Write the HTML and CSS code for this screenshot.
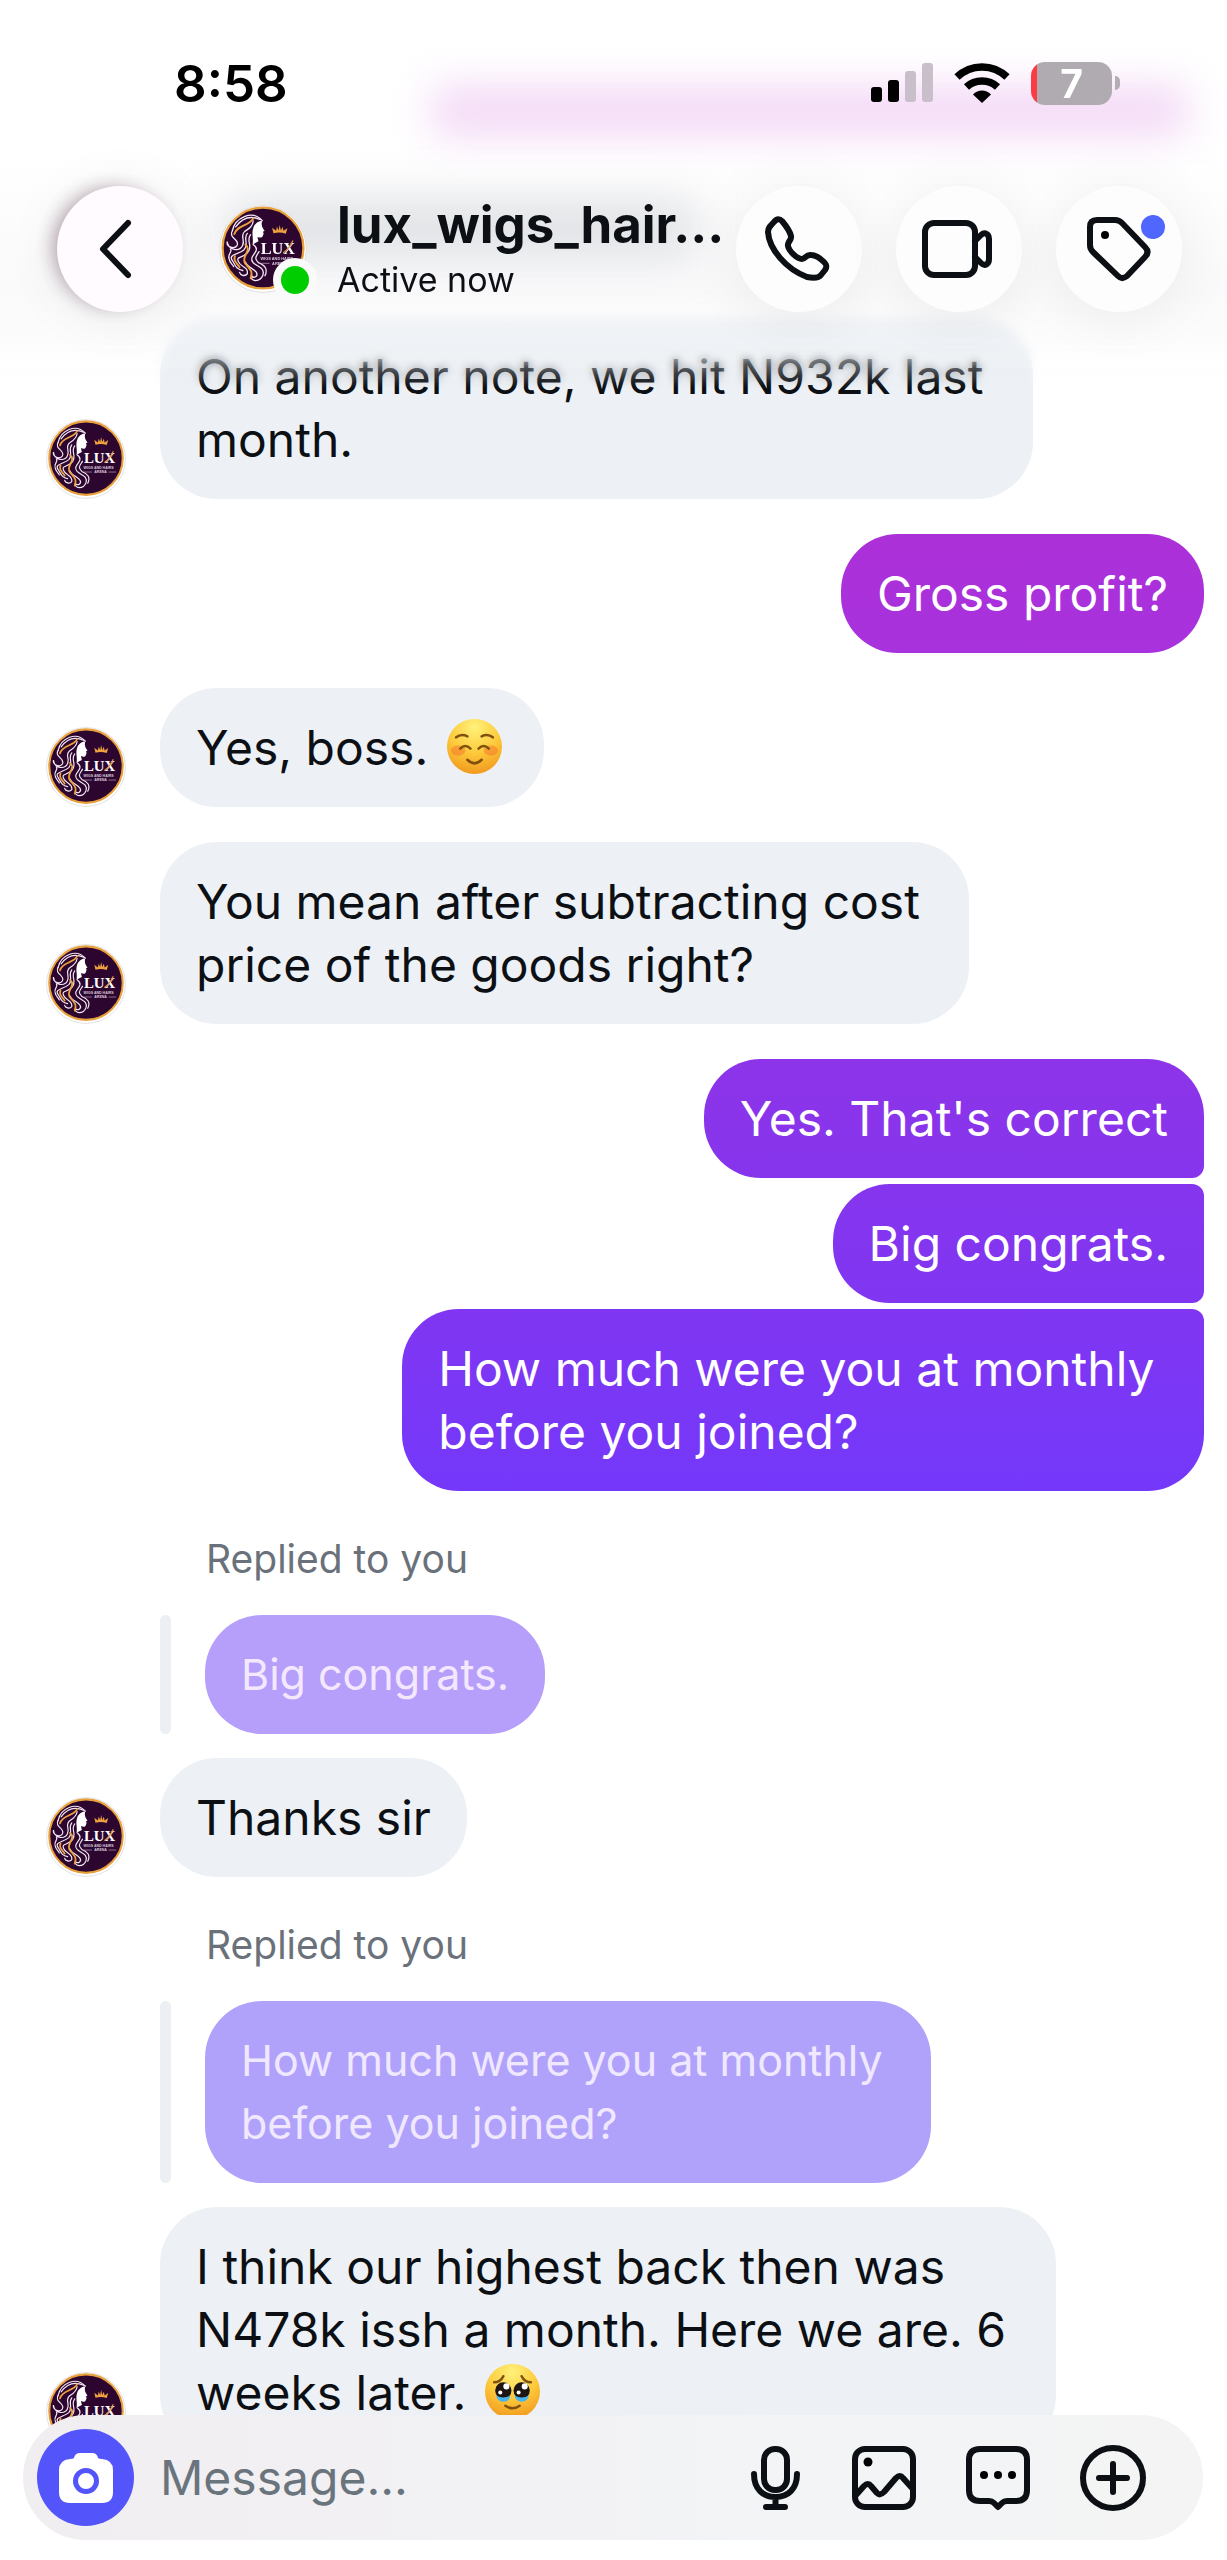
FILE: index.html
```html
<!DOCTYPE html>
<html lang="en">
<head>
<meta charset="utf-8">
<meta name="viewport" content="width=device-width, initial-scale=1">
<title>lux_wigs_hair - Messages</title>
<link rel="stylesheet" href="styles.css">
</head>
<body>
<svg class="sprite" aria-hidden="true">
  <symbol id="logo" viewBox="25 25 270 270">
    <circle cx="160" cy="160" r="133" fill="#fff" stroke="#dedede" stroke-width="3"/>
    <circle cx="160" cy="157" r="124" fill="#2d0630" stroke="#e8a03c" stroke-width="7"/>
    <path fill="#fff" d="M130 96C134 82 146 74 157 74C154 87 158 95 165 104L160 107L162 113L159 121C156 127 149 125 143 123L146 136L128 146C132 130 124 112 130 96Z"/>
    <g fill="none" stroke="#f3e8f4" stroke-width="4" stroke-linecap="round">
      <path d="M66 104C74 64 126 38 158 73"/>
      <path d="M76 92C98 62 126 58 152 70"/>
      <path d="M66 104C52 126 92 132 80 150C70 162 48 154 50 137C54 166 88 168 97 150C107 130 88 122 104 106C116 98 128 92 130 74"/>
      <path d="M112 112C98 128 118 144 102 162C84 178 52 176 66 196C76 210 76 222 98 226"/>
      <path d="M122 116C106 136 132 150 112 172C92 190 78 182 84 198C92 218 116 214 112 236C104 246 90 240 88 232"/>
      <path d="M130 146C160 168 110 180 130 202C144 216 166 216 160 240C150 264 120 260 124 242C132 252 146 244 140 232C132 220 112 216 106 200"/>
      <path d="M148 168C138 184 132 188 146 202C166 210 176 222 166 242"/>
      <path d="M60 160C68 168 50 176 56 190C58 202 66 206 70 214"/>
    </g>
    <g fill="none" stroke="#eda13f" stroke-width="6" stroke-linecap="round">
      <path d="M72 114C82 84 116 92 130 66"/>
      <path d="M106 146C128 164 94 180 104 202C116 220 132 226 122 250"/>
      <path d="M74 182C66 198 84 206 88 216"/>
    </g>
    <path fill="#eda13f" d="M192 112L188 95L200 104L203 92L208 103L211 86L215 103L220 92L223 104L235 96L230 113Q211 107 192 112Z"/>
    <text class="logo-name" x="153" y="174">LUX</text>
    <path d="M222 172Q240 160 252 134" stroke="#d99545" stroke-width="4" fill="none"/>
    <text class="logo-small" x="152" y="194">WIGS AND HAIRS</text>
    <text class="logo-small" x="188" y="208">ARENA</text>
    <path d="M152 204H180M236 204H262" stroke="#c9b3cc" stroke-width="2"/>
  </symbol>
  <radialGradient id="face" cx=".5" cy=".15" r=".95">
    <stop offset="0" stop-color="#fff27a"/><stop offset=".5" stop-color="#fdc93a"/><stop offset="1" stop-color="#ee8d17"/>
  </radialGradient>
</svg>

<div class="screen">
  <header class="top">
    <div class="veil"></div>
    <div class="glow"></div>
    <div class="status">
      <time class="clock">8:58</time>
      <div class="indicators">
        <svg width="62" height="40" viewBox="0 0 62 40" role="img" aria-label="Signal">
          <rect y="24" width="11" height="15" rx="3"/><rect x="17" y="17" width="11" height="22" rx="3"/>
          <g fill="#c9bfcb"><rect x="34" y="8" width="11" height="31" rx="3"/><rect x="51" width="11" height="39" rx="3"/></g>
        </svg>
        <svg width="56" height="40" viewBox="0 0 56 40" role="img" aria-label="Wi-Fi">
          <g fill="none" stroke="#000" stroke-width="7.5"><path d="M3 14C17 .5 39 .5 53 14"/><path d="M12.500 24C21 16 35 16 43.500 24"/></g>
          <path d="M19 31.500C24 26 32 26 37 31.500L28 40Z"/>
        </svg>
        <div class="battery"><span class="level">7</span><span class="nub"></span></div>
      </div>
    </div>
    <div class="bar">
      <button class="round back" aria-label="Back">
        <svg width="42" height="58" viewBox="0 0 42 58"><path d="M29 3L4 29L29 55" class="line"/></svg>
      </button>
      <div class="profile">
        <svg class="logo" role="img" aria-label="Lux Wigs and Hairs"><use href="#logo"/></svg>
        <span class="online"></span>
      </div>
      <div class="who">
        <h1>lux_wigs_hair...</h1>
        <p>Active now</p>
      </div>
      <div class="actions">
        <button class="round" aria-label="Call">
          <svg width="68" height="64" viewBox="0 0 68 64"><path class="line" d="M9 5C12 1 15 2 17 4C22 10 25 15 26 19C27 23 22 25 23 29C24 34 32 42 37 42C41 42 41 37 46 38C50 38 55 41 59 45C62 48 62 50 60 53L56 58C53 62 47 61 42 60C21 52 4 32 3 15C3 11 5 9 9 5Z"/></svg>
        </button>
        <button class="round" aria-label="Video call">
          <svg width="74" height="64" viewBox="0 0 74 64"><g class="line"><rect x="3" y="6" width="50" height="52" rx="9"/><path d="M53 24L59 18C63 14.500 67 17 67 22V42C67 47 63 50 59 46L53 40"/></g></svg>
        </button>
        <button class="round" aria-label="Labels">
          <svg width="64" height="64" viewBox="0 0 64 64"><path class="line" d="M10 3H28Q32 3 35 6L58 30Q63 35 58 40L40 59Q35 63 31 59L6 35Q3 32 3 28V10Q3 3 10 3Z"/><circle cx="18" cy="18" r="4"/></svg>
          <span class="dot"></span>
        </button>
      </div>
    </div>
  </header>

  <main class="thread">
    <div class="row">
      <svg class="logo" aria-hidden="true"><use href="#logo"/></svg>
      <p class="bubble">On another note, we hit N932k last&nbsp;<br>month.</p>
    </div>
    <div class="row sent"><p class="bubble tone-a">Gross profit?</p></div>
    <div class="row">
      <svg class="logo" aria-hidden="true"><use href="#logo"/></svg>
      <p class="bubble">Yes, boss. <svg class="emoji" viewBox="0 0 54 54" role="img" aria-label="Smiling face">
        <circle cx="27" cy="27" r="27" fill="url(#face)"/>
        <g fill="#f56a2c" opacity=".45"><ellipse cx="11" cy="31" rx="7" ry="5"/><ellipse cx="43" cy="31" rx="7" ry="5"/></g>
        <g fill="none" stroke="#80500f" stroke-width="2.5" stroke-linecap="round"><path d="M9 18Q14 14 20 17M34 17Q40 14 45 18M13 29Q18 24 23 29M31 29Q36 24 41 29M20 40Q27 47 34 40"/></g>
      </svg></p>
    </div>
    <div class="row">
      <svg class="logo" aria-hidden="true"><use href="#logo"/></svg>
      <p class="bubble">You mean after subtracting cost&nbsp;<br>price of the goods right?</p>
    </div>
    <div class="group">
      <p class="bubble tone-b first">Yes. That's correct</p>
      <p class="bubble tone-c middle">Big congrats.</p>
      <p class="bubble tone-d last">How much were you at monthly&nbsp;<br>before you joined?</p>
    </div>
    <div class="reply">
      <p class="label">Replied to you</p>
      <blockquote class="quote"><p class="bubble tone-e">Big congrats.</p></blockquote>
      <div class="row">
        <svg class="logo" aria-hidden="true"><use href="#logo"/></svg>
        <p class="bubble">Thanks sir</p>
      </div>
    </div>
    <div class="reply">
      <p class="label">Replied to you</p>
      <blockquote class="quote"><p class="bubble tone-f">How much were you at monthly&nbsp;<br>before you joined?</p></blockquote>
      <div class="row">
        <svg class="logo" aria-hidden="true"><use href="#logo"/></svg>
        <p class="bubble">I think our highest back then was<br>N478k issh a month. Here we are. 6&nbsp;<br>weeks later. <svg class="emoji" viewBox="0 0 54 54" role="img" aria-label="Face holding back tears">
          <circle cx="27" cy="27" r="27" fill="url(#face)"/>
          <g fill="none" stroke="#80500f" stroke-width="2.500" stroke-linecap="round"><path d="M9 18Q15 18 18 12M36 12Q39 18 45 18M20 41Q27 46 34 41"/></g>
          <g fill="#1d1512"><circle cx="18" cy="26" r="8"/><circle cx="36" cy="26" r="8"/></g>
          <g fill="#46b4ee"><path d="M11 31Q18 35 25 31Q24 37 18 37Q12 37 11 31ZM29 31Q36 35 43 31Q42 37 36 37Q30 37 29 31Z"/></g>
          <g fill="#fff"><circle cx="21" cy="22" r="3"/><circle cx="39" cy="22" r="3"/><circle cx="15" cy="28" r="2"/><circle cx="33" cy="28" r="2"/></g>
        </svg></p>
      </div>
    </div>
  </main>

  <form class="composer">
    <button type="button" class="camera" aria-label="Camera">
      <svg width="54" height="50" viewBox="0 0 54 50"><path fill="#fff" d="M15 5Q16 0 21 0H33Q38 0 39 5Q40 6 43 6Q54 7 54 17V39Q54 50 43 50H11Q0 50 0 39V17Q0 7 11 6Q14 6 15 5Z"/><circle cx="27" cy="28" r="10.500" fill="none" stroke="#5454fb" stroke-width="5"/></svg>
    </button>
    <input type="text" placeholder="Message..." aria-label="Message">
    <div class="tools">
      <button type="button" aria-label="Voice message"><svg width="52" height="64" viewBox="0 0 52 64"><g class="line"><rect x="14" y="3" width="23" height="41" rx="11"/><path d="M4 28C4 43 13 51 25.500 51S47 43 47 28M25.500 51V60M16 61H35"/></g></svg></button>
      <button type="button" aria-label="Photo"><svg width="64" height="64" viewBox="0 0 64 64"><g class="line"><rect x="3" y="3" width="58" height="58" rx="10"/><path d="M4 49L12 40Q16 36 19 40L25 47Q28 50 32 46L44 32Q48 28 51 32L60 42"/></g><circle cx="16" cy="16" r="4.500"/></svg></button>
      <button type="button" aria-label="Quick reply"><svg width="64" height="64" viewBox="0 0 64 64"><path class="line" d="M14 3H50Q61 3 61 14V44Q61 55 50 55H41Q38 55 36 57L32 61L28 57Q26 55 23 55H14Q3 55 3 44V14Q3 3 14 3Z"/><circle cx="18" cy="29" r="4"/><circle cx="32" cy="29" r="4"/><circle cx="46" cy="29" r="4"/></svg></button>
      <button type="button" aria-label="More"><svg width="66" height="66" viewBox="0 0 66 66"><g class="line"><circle cx="33" cy="33" r="30"/><path d="M19 33H47M33 19V47"/></g></svg></button>
    </div>
  </form>
</div>
</body>
</html>
```
FILE: styles.css
```css
* { box-sizing: border-box; }
body, h1, p, blockquote { margin: 0; }
body {
  background: #fff;
  color: #0c1014;
  font-family: Inter, "Liberation Sans", sans-serif;
}
button { border: 0; padding: 0; background: none; color: inherit; }
svg { display: block; overflow: visible; }
.sprite { position: absolute; width: 0; height: 0; }
.line { fill: none; stroke: #0c1014; stroke-width: 6; stroke-linecap: round; stroke-linejoin: round; }
.logo-name { font: bold 50px "Liberation Serif", serif; fill: #fff; }
.logo-small { font: bold 12px "Liberation Sans", sans-serif; fill: #d8c6da; }

.screen { min-height: 100vh; display: flex; flex-direction: column; overflow: hidden; }

.top { position: sticky; top: 0; z-index: 2; padding-bottom: 5px; }
.veil {
  position: absolute;
  inset: 0 0 -72px;
  background: linear-gradient(transparent 40%, rgba(246, 246, 248, .6) 75%, transparent);
  backdrop-filter: blur(4px);
  -webkit-mask-image: linear-gradient(#000 88%, transparent);
  mask-image: linear-gradient(#000 88%, transparent);
}
.glow {
  position: absolute;
  top: 86px;
  left: 432px;
  right: 40px;
  height: 50px;
  background: #f3d8f6;
  filter: blur(20px);
}
.status {
  position: relative;
  height: 186px;
  padding: 60px 107px 0 174px;
  display: flex;
  justify-content: space-between;
  align-items: flex-start;
}
.clock { color: #000; font-size: 51px; font-weight: 600; line-height: 48px; }
.indicators { display: flex; align-items: center; gap: 21px; height: 46px; }
.battery { display: flex; align-items: center; gap: 3px; }
.level {
  width: 81px;
  height: 43px;
  border-radius: 14px;
  background: linear-gradient(90deg, #fb3c44 6px, #afabb0 6px);
  color: #fff;
  font-size: 39px;
  font-weight: 700;
  line-height: 43px;
  text-align: center;
}
.nub { width: 5px; height: 14px; border-radius: 0 6px 6px 0; background: #b3adb4; }

.bar { position: relative; display: flex; align-items: center; padding: 0 45px 0 57px; }
.round {
  position: relative;
  flex: none;
  width: 126px;
  height: 126px;
  border-radius: 50%;
  background: #fdfdfd;
  box-shadow: 0 4px 60px rgba(0, 0, 0, .07);
  display: grid;
  place-items: center;
}
.back { background: #fffbff; box-shadow: 0 4px 60px rgba(0, 0, 0, .07), -8px -2px 20px -6px rgba(70, 30, 50, .45); }
.profile { position: relative; z-index: 1; flex: none; width: 88px; height: 88px; margin-left: 36px; }
.profile .logo { width: 88px; height: 88px; }
.online {
  position: absolute;
  right: -10px;
  bottom: -9px;
  width: 44px;
  height: 44px;
  border: 8px solid #fafafb;
  border-radius: 50%;
  background: #00cd00;
}
.who { position: relative; flex: 1; min-width: 0; margin-left: 30px; white-space: nowrap; }
.who::before {
  content: "";
  position: absolute;
  inset: 8px 40px 50px -110px;
  background: rgba(190, 194, 200, .5);
  filter: blur(24px);
}
.who h1 { position: relative; font-size: 51px; line-height: 62px; font-weight: 700; }
.who p { position: relative; font-size: 34px; line-height: 48px; }
.actions { display: flex; gap: 34px; }
.dot { position: absolute; top: 29px; right: 17px; width: 24px; height: 24px; border-radius: 50%; background: #4f66ff; }

.thread { display: flex; flex-direction: column; gap: 35px; padding: 0 23px 0 46px; }
.row { display: flex; align-items: flex-end; gap: 34px; }
.row .logo { flex: none; width: 80px; height: 80px; }
.sent { justify-content: flex-end; }
.bubble {
  padding: 28px 36px;
  border-radius: 57px;
  background: #edf1f5;
  font-size: 48px;
  line-height: 63px;
}
.emoji { display: inline-block; width: 55px; height: 55px; margin: 0 6px 0 5px; vertical-align: -9px; }
.group { display: flex; flex-direction: column; align-items: flex-end; gap: 6px; }
.tone-a { background: linear-gradient(#ac30d8, #a832dd); color: #fff; }
.tone-b { background: linear-gradient(#8d34e9, #8635ed); color: #fff; }
.tone-c { background: linear-gradient(#8635ee, #8036f1); color: #fff; }
.tone-d { background: linear-gradient(#8036f2, #7438fa); color: #fff; }
.first { border-bottom-right-radius: 12px; }
.middle { border-top-right-radius: 12px; border-bottom-right-radius: 12px; }
.last { border-top-right-radius: 12px; }

.reply { display: flex; flex-direction: column; padding-top: 9px; }
.label { padding-left: 160px; font-size: 39px; line-height: 48px; color: #6a717a; }
.quote { display: flex; gap: 34px; margin: 32px 0 24px 114px; }
.quote::before { content: ""; width: 11px; border-radius: 6px; background: #eceff3; }
.quote .bubble { font-size: 43px; }
.tone-e { background: #b69efb; color: #f4e8ff; }
.tone-f { background: #b0a2fb; color: #f0e8ff; }

.composer {
  position: sticky;
  bottom: 20px;
  z-index: 2;
  display: flex;
  align-items: center;
  height: 125px;
  margin: -37px 24px 20px 23px;
  padding: 0 57px 0 14px;
  border-radius: 63px;
  background: linear-gradient(90deg, #f1eef1, #f2f1f4 40%, #f2f4f6 65%, #f4f4f4);
}
.camera { flex: none; width: 97px; height: 97px; border-radius: 50%; background: #5454fb; display: grid; place-items: center; }
.composer input {
  flex: 1;
  min-width: 0;
  margin-left: 26px;
  padding: 0;
  border: 0;
  outline: 0;
  background: none;
  color: #0c1014;
  font: 48px/63px Inter, "Liberation Sans", sans-serif;
}
.composer input::placeholder { color: #6a747d; opacity: 1; }
.tools { display: flex; align-items: center; gap: 50px; }
```
